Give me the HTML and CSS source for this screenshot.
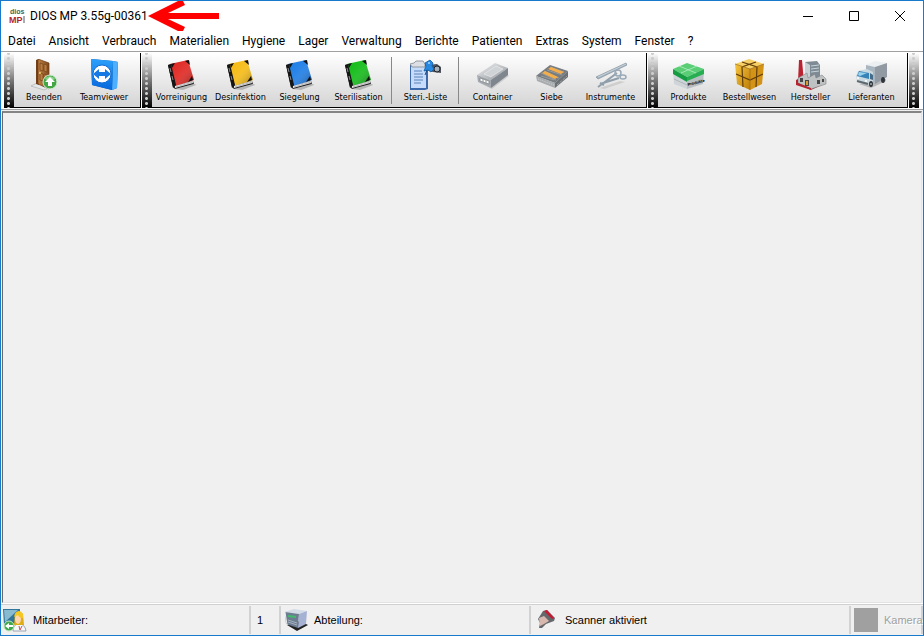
FILE: index.html
```html
<!DOCTYPE html>
<html lang="de">
<head>
<meta charset="utf-8">
<title>DIOS MP 3.55g-00361</title>
<link rel="stylesheet" href="styles.css">
</head>
<body>
<svg class="defs" aria-hidden="true">
  <defs>
    <linearGradient id="steel" x1="0" y1="0" x2="1" y2="1"><stop offset="0" stop-color="#f4f5f6"/><stop offset="1" stop-color="#8d9298"/></linearGradient>
    <linearGradient id="sky" x1="0" y1="0" x2="0" y2="1"><stop offset="0" stop-color="#2ba0fb"/><stop offset="1" stop-color="#0868dc"/></linearGradient>
    <linearGradient id="gold" x1="0" y1="0" x2="1" y2="1"><stop offset="0" stop-color="#f6c53c"/><stop offset="1" stop-color="#bd7d08"/></linearGradient>
    <linearGradient id="wood" x1="0" y1="0" x2="1" y2="0"><stop offset="0" stop-color="#c08345"/><stop offset="1" stop-color="#80471d"/></linearGradient>
    <linearGradient id="shine" x1="0" y1="0" x2="1" y2="1"><stop offset="0" stop-color="#fff" stop-opacity="0"/><stop offset=".5" stop-color="#fff" stop-opacity=".12"/><stop offset="1" stop-color="#000" stop-opacity=".4"/></linearGradient>
    <symbol id="book" viewBox="0 0 32 32">
      <path d="M9 30l20-5 1 1-13 5z" fill="#888" opacity=".5"/>
      <path d="M2 6l4-1 5 21 16-4 1 3-19 5-2-2z" fill="#252525"/>
      <path d="M4 5L22 1l6 20-18 6z" fill="currentColor"/>
      <path d="M4 5L22 1l6 20-18 6z" fill="url(#shine)"/>
      <path d="M2 6l3-1 5 21-3 3z" fill="#151515"/>
      <path d="M4 9l1 4M6 17l1 4" stroke="#aaa" stroke-width=".8"/>
      <path d="M9 27l18-5v2L9 29z" fill="#e9e9e9"/>
      <path d="M10 28l17-5" stroke="#999" stroke-width=".6"/>
      <path d="M19 2l4-1 1 5zM26 17l1 4-5 2zM5 5l4-1-3 5z" fill="#111"/>
    </symbol>
  </defs>
</svg>
<div class="window">
  <header class="titlebar">
    <svg class="logo" viewBox="0 0 16 16" aria-hidden="true">
      <text x="1" y="6" class="logo-top">dios</text><text x="0" y="15" class="logo-main">MP</text><path d="M15 8v7" stroke="#57585a"/>
    </svg>
    <h1>DIOS MP 3.55g-00361</h1>
    <svg class="arrow" viewBox="0 0 72 34" aria-hidden="true"><path d="M0 17L34 0l3 6-17 8h51v6H20l17 8-3 6z" fill="#f00"/></svg>
    <div class="controls">
      <button type="button" aria-label="Minimieren"><svg viewBox="0 0 12 12"><path d="M1 6.5h10" /></svg></button>
      <button type="button" aria-label="Maximieren"><svg viewBox="0 0 12 12"><path d="M1.500 1.500h9v9h-9z"/></svg></button>
      <button type="button" aria-label="Schließen"><svg viewBox="0 0 12 12"><path d="M1 1l10 10M11 1L1 11"/></svg></button>
    </div>
  </header>
  <nav class="menu">
    <a href="#">Datei</a><a href="#">Ansicht</a><a href="#">Verbrauch</a><a href="#">Materialien</a><a href="#">Hygiene</a><a href="#">Lager</a><a href="#">Verwaltung</a><a href="#">Berichte</a><a href="#">Patienten</a><a href="#">Extras</a><a href="#">System</a><a href="#">Fenster</a><a href="#">?</a>
  </nav>
  <div class="toolbar">
    <div class="band">
      <span class="grip"></span>
      <button type="button"><svg viewBox="0 0 32 32">
        <path d="M3 27l8-4 12 5-7 3z" fill="#e5e7e9" stroke="#a5a8ab" stroke-width=".6"/>
        <path d="M8 1l3-1v26l-3-1z" fill="#714019"/><path d="M10 0l11 4v26l-11-5z" fill="url(#wood)" stroke="#6a3a16" stroke-width=".7"/>
        <path d="M12 4l3 1v7l-3-1zM16 5l3 1v7l-3-1zM12 14l3 1v7l-3-1zM16 15l3 1v7l-3-1z" fill="#b97b41" stroke="#754319" stroke-width=".7"/><circle cx="12" cy="14" r="1" fill="#f1cf70"/>
        <circle cx="22" cy="23" r="7" fill="#42a744" stroke="#d8edd8"/><path d="M17 20a6 6 0 0 1 10 0q-5 3-10 0" fill="#8bd08a"/><path d="M22 18l5 5h-3v4h-4v-4h-3z" fill="#fff"/></svg>Beenden</button>
      <button type="button"><svg viewBox="0 0 32 32">
        <path d="M3 0l22 2 5 1-1 26-5 2-20-5z" fill="#0753aa"/><path d="M25 2l5 1-1 26-5 2z" fill="#4eafff"/><path d="M3 0l22 2-1 29-20-5z" fill="url(#sky)"/>
        <circle cx="14" cy="15" r="9" fill="#fff" stroke="#126bd1"/><path d="M5 15l6-5v3h6v-3l6 5-6 5v-3h-6v3z" fill="#1679e4"/></svg>Teamviewer</button>
    </div>
    <div class="band band-main">
      <span class="grip"></span>
      <button type="button"><svg class="red"><use href="#book"/></svg>Vorreinigung</button>
      <button type="button"><svg class="yellow"><use href="#book"/></svg>Desinfektion</button>
      <button type="button"><svg class="blue"><use href="#book"/></svg>Siegelung</button>
      <button type="button"><svg class="green"><use href="#book"/></svg>Sterilisation</button>
      <span class="rule"></span>
      <button type="button"><svg viewBox="0 0 32 32">
        <path d="M0 6h18v24l-3 1H0z" fill="#3c68ac"/><path d="M1 7h15v22H1z" fill="#c7dcfa"/><path d="M0 5l4-1 2-2h7l2 3v3H2z" fill="#dce0e4" stroke="#7f878e" stroke-width=".8"/>
        <path d="M4 12h8M4 15h9M4 18h9M4 21h9M4 24h7" stroke="#5982bb"/>
        <path d="M17 6l10-1 4 3v6l-8-1-7-2z" fill="#4e545d"/><circle cx="27" cy="10" r="3" fill="#a4aeb6" stroke="#22262b"/>
        <path d="M15 4l5-3 3 3-1 3 2 3-3 3-3-2-4 1 2-5z" fill="#2889e2" stroke="#105aa5" stroke-width=".8"/><path d="M17 11l-2 5" stroke="#174d80"/><circle cx="19" cy="4" r="1" fill="#a7d7ff"/></svg>Steri.-Liste</button>
      <span class="rule"></span>
      <button type="button"><svg viewBox="0 0 32 32">
        <path d="M3 24l12 6 17-13-2-2z" fill="#999" opacity=".35"/><path d="M0 16L18 4l13 5-17 12z" fill="url(#steel)"/><path d="M7 15l12-8 7 3-12 8z" fill="#d0d3d5" stroke="#f4f4f4" stroke-width=".5"/><path d="M0 16l14 5v8L1 23z" fill="#a5aab0"/><path d="M14 21L31 9v7L14 29z" fill="#7f868e"/><path d="M3 19l9 3v3l-9-3z" fill="#f4f5f5" stroke="#6f757b" stroke-width=".6"/><path d="M6 20v3M9 21v3" stroke="#999"/></svg>Container</button>
      <button type="button"><svg viewBox="0 0 32 32">
        <path d="M0 17L14 6l18 6-13 12z" fill="#777c80"/><path d="M0 17l19 7v5L1 22z" fill="#a8acaf"/><path d="M19 24l13-12v6L19 29z" fill="#6b7074"/><path d="M5 17l13 4M8 14l14 5M11 11l15 5M14 8l14 5M5 14l15 7M8 12l15 7" stroke="#bbb" stroke-width=".5"/><path d="M12 10l3-2 13 5-3 2zM6 14l3-2 13 6-3 2z" fill="#f4ae4c"/><path d="M2 20l16 6M21 26l10-9" stroke="#ddd" stroke-width=".7" stroke-dasharray="1 1"/></svg>Siebe</button>
      <button type="button"><svg viewBox="0 0 32 32">
        <path d="M5 29l20-7 5 1-21 7z" fill="#aaa" opacity=".4"/><path d="M1 18L31 4l1 2L3 20z" fill="#a3b2bd" stroke="#798895" stroke-width=".6"/><path d="M3 18L31 5" stroke="#dce7ee" stroke-width=".6"/><path d="M3 28L22 14M5 25l19-6M5 24l4 2" stroke="#8f9eab" stroke-width="2"/><g fill="none" stroke="#98a9b8" stroke-width="1.500"><circle cx="23" cy="14" r="3"/><ellipse cx="28" cy="18" rx="3" ry="2"/></g></svg>Instrumente</button>
    </div>
    <div class="band band-last">
      <span class="grip"></span>
      <button type="button"><svg viewBox="0 0 32 32">
        <path d="M0 11l14 7v12L1 25z" fill="#ced4d7"/><path d="M14 18l17-5-1 12-16 5z" fill="#b8bfc3"/><path d="M0 10L14 4l17 6-17 8z" fill="#59ce75"/><path d="M0 10l14 8v5L0 15z" fill="#169c43"/><path d="M14 18l17-8v5l-17 7z" fill="#25af51"/><path d="M6 7l17 7M8 14l16-7" stroke="#b5edc4" stroke-width=".8"/><path d="M1 20l13 6 16-6" fill="none" stroke="#9aa2a6" stroke-width=".6"/><text x="15" y="27" class="box-text" transform="rotate(-14 15 27)">Produkte</text></svg>Produkte</button>
      <button type="button"><svg viewBox="0 0 32 32">
        <path d="M1 5L15 0l15 5-14 5z" fill="#f6d064"/><path d="M1 5l15 5v21L3 25z" fill="url(#gold)"/><path d="M16 10l14-5-2 20-12 6z" fill="#d29317"/><path d="M8 3l15 5-1 20M22 3L8 8l1 20M2 15l14 6 13-6" fill="none" stroke="#613d0c" stroke-width="1.200"/><path d="M1 5l15 5 14-5M16 10v21" fill="none" stroke="#9e6a12" stroke-width=".7"/></svg>Bestellwesen</button>
      <button type="button"><svg viewBox="0 0 32 32">
        <path d="M1 24l15 7 15-7-11-6z" fill="#a33c40"/><path d="M10 3l12-1 3 4v16l-15 2z" fill="#7f8b94"/><path d="M10 3l5 3v17l-5-2z" fill="#cbd2d6"/><path d="M16 7l8-1M16 10l8-1M16 13l8-1" stroke="#c7d3da"/><path d="M4 1h3l2 23-6-2z" fill="#ba2432"/><path d="M3 19l9-5 1 5 7-4 1 4 6-3 4 4v5l-15 5-13-6z" fill="#bfc2c3" stroke="#777" stroke-width=".5"/><path d="M5 19h3v4H5zM10 21h4v6h-4zM22 21h3v4h-3zM27 20h2v3h-2z" fill="#484747"/><path d="M11 22h2v4h-2z" fill="#d89c31"/><path d="M1 21l2-1v4l13 5v2L1 26z" fill="#b42431"/></svg>Hersteller</button>
      <button type="button"><svg viewBox="0 0 32 32">
        <path d="M3 25l12 4 15-7v-2z" fill="#888" opacity=".5"/><path d="M10 6l9-4 12 2-12 4z" fill="#eceff1"/><path d="M10 6l9 2v17l-9-3z" fill="#a9b5bf"/><path d="M19 8l12-4v14l-12 7z" fill="#919aa3"/><path d="M2 12l9-2 6 3v14L1 23l-1-6z" fill="#cad8e0"/><path d="M3 12l10 2v6L1 17z" fill="#3683b8"/><path d="M3 13l8 1-7 3-2-1z" fill="#9ad1ed"/><path d="M14 14l3 2v5l-3-1z" fill="#446b87"/><path d="M1 22l11 3" stroke="#5f6970" stroke-width="2"/><circle cx="2" cy="19" r="1" fill="#fff"/><circle cx="10" cy="22" r="1" fill="#fff"/><ellipse cx="15" cy="25" rx="2" ry="3" fill="#30363b"/><ellipse cx="27" cy="21" rx="2" ry="3" fill="#30363b"/><ellipse cx="15" cy="25" rx="1" ry="1" fill="#aaa"/></svg>Lieferanten</button>
    </div>
    <span class="grip"></span>
  </div>
  <main class="workspace"></main>
  <footer class="status">
    <div class="panel staff"><svg viewBox="0 0 24 24"><path d="M0 1h17v16H1z" fill="#31759a"/><path d="M1 2h14L2 14z" fill="#88bbd0"/><path d="M10 23q0-7 6-7t7 7z" fill="#f7f8fa" stroke="#9ba6b4"/><path d="M12 6q3-5 8 0l1 11H11z" fill="#dfae16"/><ellipse cx="15" cy="11" rx="3" ry="5" fill="#ffd6ad"/><path d="M11 9q1-6 5-6 5 1 4 7-4 0-5-3z" fill="#f4c820"/><path d="M16 18l1 4 2-4" stroke="#cf5050" fill="none"/><circle cx="6" cy="18" r="5" fill="#40a84c" stroke="#c4e8c5"/><path d="M2 18l4-3v2h4v2H6v2z" fill="#fff"/></svg>Mitarbeiter:</div>
    <div class="panel count">1</div>
    <div class="panel department"><svg viewBox="0 0 24 24"><path d="M3 17l10 6 11-6-8-4z" fill="#222"/><path d="M0 4l10-3 13 2-8 3z" fill="#d4dce7"/><path d="M1 4l14 2-1 14-12-4z" fill="#6c7d91"/><path d="M15 6l8-3-1 13-8 4z" fill="#a6b2d4"/><path d="M4 7l8 1v2l-8-1z" fill="#41ba6b"/><path d="M4 12l9 3M4 14l9 3" stroke="#bcc6d0" stroke-width=".7"/><path d="M1 4l2 13" stroke="#eee"/></svg>Abteilung:</div>
    <div class="panel scanner"><svg viewBox="0 0 24 24"><path d="M8 3l4-1 8 8-1 3-8 3-4 4H4l1-5-2-4z" fill="#64686c"/><path d="M9 3l3-1 7 8-2 1z" fill="#c81832"/><path d="M4 10l5-2 5 5-5 3-4 2z" fill="#d8b8ae"/></svg>Scanner aktiviert</div>
    <div class="panel camera"><span class="swatch"></span>Kamera</div>
  </footer>
</div>
</body>
</html>
```

FILE: styles.css
```css
* { box-sizing: border-box; }
body { margin: 0; background: #f0f0f0; color: #000; font-family: Roboto, sans-serif; font-size: 12px; }
button { padding: 0; border: 0; background: none; color: inherit; font: inherit; }
.defs { position: absolute; width: 0; height: 0; }
.window { display: flex; flex-direction: column; min-height: 100vh; border: 1px solid #1979ca; overflow: hidden; }

.titlebar { display: flex; align-items: center; height: 30px; padding-left: 8px; background: #fff; }
.titlebar h1 { margin: 0 0 0 5px; font-size: 12px; font-weight: 400; white-space: nowrap; }
.logo { width: 16px; height: 16px; font-family: "Liberation Sans", sans-serif; font-weight: 700; }
.logo-top { font-size: 7px; fill: #35695d; }
.logo-main { font-size: 9px; fill: #b21f2d; }
.arrow { width: 72px; height: 34px; }
.controls { display: flex; margin-left: auto; }
.controls button { display: grid; place-items: center; width: 46px; height: 30px; }
.controls svg { width: 12px; height: 12px; fill: none; stroke: #000; }

.menu { display: flex; gap: 13px; height: 20px; padding-left: 7px; background: #fff; line-height: 20px; }
.menu a { color: inherit; text-decoration: none; white-space: nowrap; }

.toolbar { display: flex; gap: 1px; height: 59px; padding: 1px 4px 1px 3px; border-top: 1px solid #a0a0a0; border-bottom: 1px solid #a0a0a0; background: #fff; }
.band { display: flex; padding-right: 6px; border-right: 1px solid #000; border-bottom: 1px solid #000; background: linear-gradient(#fff, #d4d4d4); }
.band-last { flex: 1; padding-right: 4px; }
.grip { flex: none; width: 10px; height: 55px; background: radial-gradient(circle, #ccc 1px, transparent 2px) 2px 3px / 5px 5px repeat-y, linear-gradient(#fff, #777 50%, #000); }
.band button { display: flex; flex-direction: column; align-items: center; width: 60px; padding-top: 6px; font-family: "DejaVu Sans Condensed", "DejaVu Sans", sans-serif; font-size: 9px; line-height: 12px; white-space: nowrap; }
.band-main button { width: 59px; }
.band-last button { width: 61px; }
.band svg { flex: none; width: 32px; height: 32px; }
.rule { width: 1px; height: 47px; margin: 4px 4px 0 3px; background: #888; }
.red { color: #df201b; }
.yellow { color: #f5b90d; }
.blue { color: #1679e5; }
.green { color: #0cba12; }
.box-text { font-size: 4px; font-family: "Liberation Sans", sans-serif; font-weight: 700; }

.workspace { flex: 1; margin: 1px 1px 0; border-top: 2px solid #858585; border-left: 1px solid #696969; border-right: 1px solid #e3e3e3; border-bottom: 1px solid #e3e3e3; }
.status { display: flex; height: 32px; padding-bottom: 1px; border-top: 1px solid #fff; box-shadow: inset 0 1px #d0d0d0; font-family: "Liberation Sans", sans-serif; font-size: 11px; }
.panel { display: flex; align-items: center; gap: 6px; margin-top: 2px; padding-left: 2px; border-right: 2px solid #d2d2d2; white-space: nowrap; }
.panel svg { width: 24px; height: 24px; }
.staff { width: 250px; }
.count { width: 30px; padding-left: 6px; }
.department { width: 250px; padding-left: 3px; }
.scanner { flex: 1; padding-left: 4px; }
.camera { width: 72px; padding-left: 3px; color: #a0a0a0; text-shadow: 1px 1px #fff; }
.swatch { flex: none; width: 24px; height: 24px; background: #a0a0a0; }
```
